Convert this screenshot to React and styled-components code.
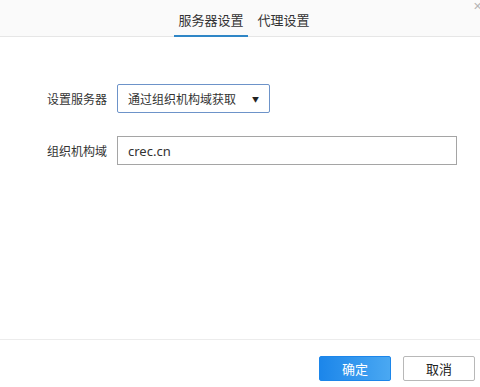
import React from "react";
import styled, { createGlobalStyle } from "styled-components";

const Global = createGlobalStyle`
  html, body { margin: 0; padding: 0; background: #fff; }
  body { font-family: "Noto Sans CJK SC", "Noto Sans", sans-serif; font-size: 12px; color: #333; }
`;

const Dialog = styled.div`
  width: 480px;
  height: 387px;
  display: flex;
  flex-direction: column;
  background: #fff;
  position: relative;
  overflow: hidden;
`;

const Header = styled.div`
  height: 37px;
  background: #fafafa;
  border-bottom: 1px solid #e6e6e6;
  display: flex;
  justify-content: center;
  align-items: stretch;
  gap: 6px;
  padding-left: 8px;
  box-sizing: border-box;
`;

const Tab = styled.div`
  padding: 4px 4px 0;
  display: flex;
  align-items: center;
  font-size: 13px;
  color: #333;
  border-bottom: 2px solid ${(p) => (p.active ? "#2f86c6" : "transparent")};
  margin-bottom: -1px;
`;

const Close = styled.div`
  position: absolute;
  top: -3px;
  right: -2px;
  font-size: 11px;
  color: #b5b5b5;
`;

const Body = styled.div`
  flex: 1;
  padding: 47px 23px 0 47px;
  display: flex;
  flex-direction: column;
  gap: 23px;
`;

const Row = styled.div`
  display: flex;
  align-items: center;
`;

const Label = styled.div`
  width: 70px;
  color: #333;
`;

const Select = styled.div`
  width: 153px;
  height: 29px;
  box-sizing: border-box;
  border: 1px solid #6d93c9;
  border-radius: 2px;
  display: flex;
  align-items: center;
  justify-content: space-between;
  padding: 0 10px 0 10px;
  background: #fff;
`;

const Arrow = styled.span`
  font-size: 7px;
  color: #222;
`;

const Input = styled.div`
  width: 340px;
  height: 29px;
  box-sizing: border-box;
  border: 1px solid #a5a5a5;
  display: flex;
  align-items: center;
  padding: 0 10px;
  font-family: "Noto Sans", "Noto Sans CJK SC", sans-serif;
  font-size: 13px;
`;

const Footer = styled.div`
  height: 48px;
  box-sizing: border-box;
  border-top: 1px solid #ececec;
  display: flex;
  justify-content: flex-end;
  align-items: flex-start;
  gap: 12px;
  padding: 16px 5px 0 0;
`;

const Button = styled.div`
  width: 72px;
  height: 25px;
  box-sizing: border-box;
  display: flex;
  align-items: center;
  justify-content: center;
  border-radius: 2px;
  font-size: 13px;
  color: ${(p) => (p.primary ? "#fff" : "#222")};
  background: ${(p) =>
    p.primary ? "linear-gradient(90deg, #1c86ea, #4aa8f2)" : "#fff"};
  border: 1px solid ${(p) => (p.primary ? "#1c86ea" : "#b8b8b8")};
`;

const App = () => (
  <Dialog>
    <Global />
    <Header>
      <Tab active>服务器设置</Tab>
      <Tab>代理设置</Tab>
    </Header>
    <Close>✕</Close>
    <Body>
      <Row>
        <Label>设置服务器</Label>
        <Select>
          <span>通过组织机构域获取</span>
          <Arrow>▼</Arrow>
        </Select>
      </Row>
      <Row>
        <Label>组织机构域</Label>
        <Input>crec.cn</Input>
      </Row>
    </Body>
    <Footer>
      <Button primary>确定</Button>
      <Button>取消</Button>
    </Footer>
  </Dialog>
);

export default App;
